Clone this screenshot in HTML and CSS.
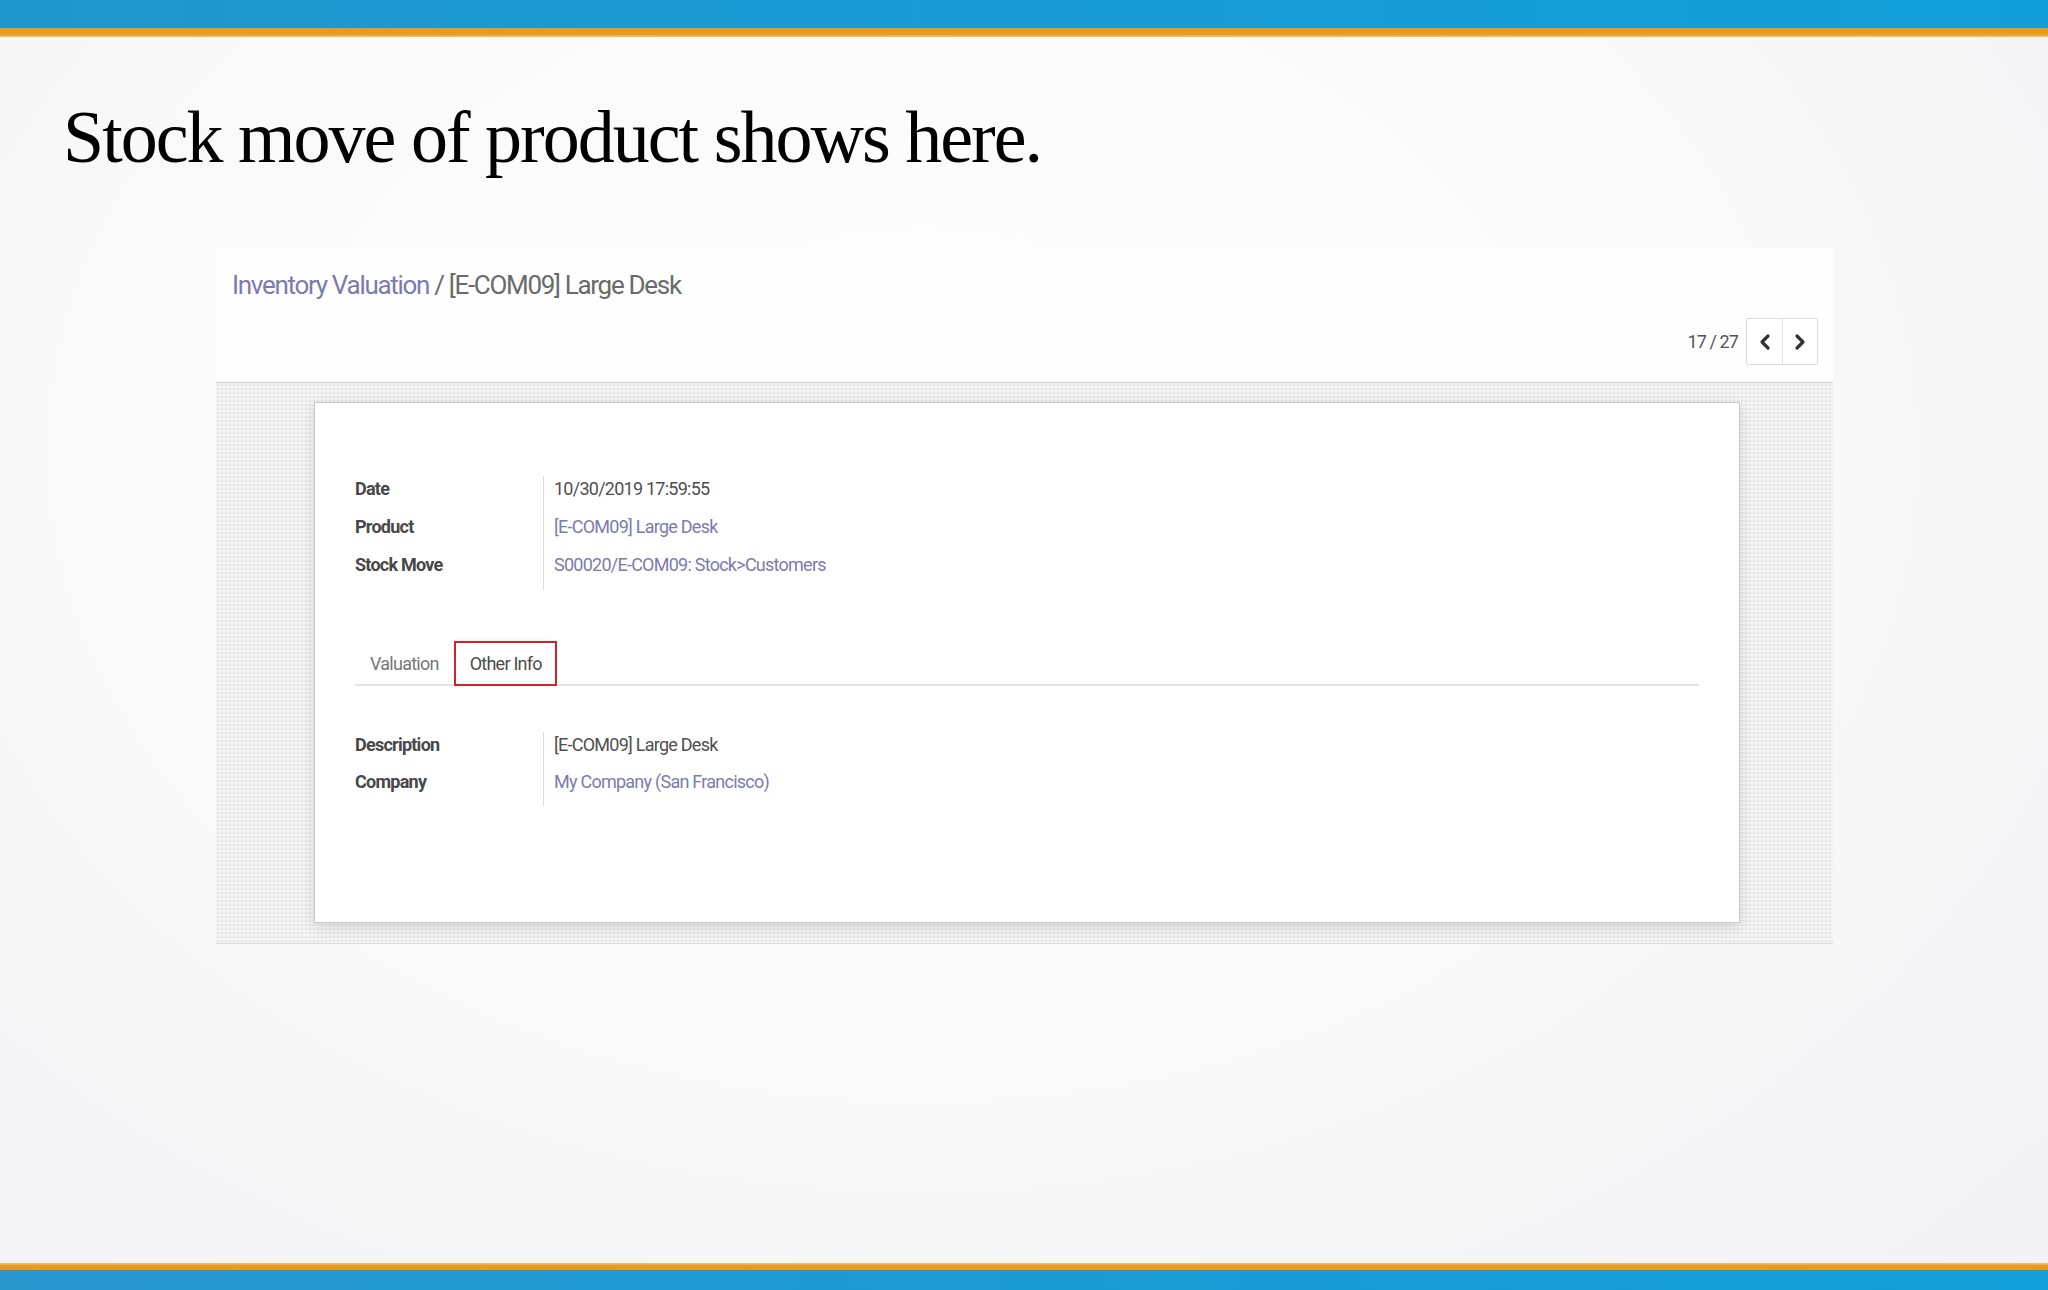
FILE: index.html
```html
<!DOCTYPE html>
<html lang="en">
<head>
<meta charset="utf-8">
<title>Stock move of product</title>
<link rel="stylesheet" href="styles.css">
</head>
<body>
<div class="slide">
  <div class="topbar"></div>
  <div class="topstripe"></div>
  <main class="content">
    <h1 class="title">Stock move of product shows here.</h1>
    <section class="card">
      <header class="cp">
        <div class="breadcrumb"><span class="bc-link">Inventory Valuation</span><span class="bc-cur"> / [E-COM09] Large Desk</span></div>
        <div class="pager">
          <span class="pager-val">17 / 27</span>
          <div class="pager-btns">
            <button class="pbtn" aria-label="Previous"><svg width="12" height="18" viewBox="0 0 12 18"><polyline points="9,3 3,9 9,15" fill="none" stroke="#333" stroke-width="3.2" stroke-linecap="round" stroke-linejoin="round"/></svg></button>
            <button class="pbtn" aria-label="Next"><svg width="12" height="18" viewBox="0 0 12 18"><polyline points="3,3 9,9 3,15" fill="none" stroke="#333" stroke-width="3.2" stroke-linecap="round" stroke-linejoin="round"/></svg></button>
          </div>
        </div>
      </header>
      <div class="sheet-bg">
        <div class="sheet">
          <div class="group group-main">
            <div class="labels">
              <div class="row lbl">Date</div>
              <div class="row lbl">Product</div>
              <div class="row lbl">Stock Move</div>
            </div>
            <div class="values">
              <div class="row val">10/30/2019 17:59:55</div>
              <div class="row val link">[E-COM09] Large Desk</div>
              <div class="row val link">S00020/E-COM09: Stock&gt;Customers</div>
            </div>
          </div>
          <nav class="tabs">
            <span class="tab">Valuation</span>
            <span class="tab active">Other Info</span>
          </nav>
          <div class="group group-info">
            <div class="labels">
              <div class="row lbl">Description</div>
              <div class="row lbl">Company</div>
            </div>
            <div class="values">
              <div class="row val">[E-COM09] Large Desk</div>
              <div class="row val link">My Company (San Francisco)</div>
            </div>
          </div>
        </div>
      </div>
    </section>
  </main>
  <div class="bottomstripe"></div>
  <div class="bottombar"></div>
</div>
</body>
</html>
```
FILE: styles.css
```css
html, body {
  margin: 0;
  padding: 0;
}
body {
  width: 2048px;
  height: 1290px;
  overflow: hidden;
  background: #f7f7f9;
}
.slide {
  width: 2048px;
  height: 1290px;
  display: flex;
  flex-direction: column;
  background: radial-gradient(ellipse at 45% 35%, #fefefe 0%, #fafafb 45%, #f2f2f4 100%);
}
.topbar {
  height: 28px;
  background: linear-gradient(90deg, #2196cc 0%, #1a9bd5 40%, #129fd9 100%);
}
.topstripe {
  height: 9px;
  background: linear-gradient(180deg, #e69a22 0%, #e99c1f 70%, #f1c47a 100%);
}
.content {
  flex: 1;
  padding: 63px 0 0 63px;
}
.title {
  margin: 0;
  font-family: "Liberation Serif", "Times New Roman", serif;
  font-weight: normal;
  font-size: 74px;
  line-height: 1;
  color: #000;
  letter-spacing: -2px;
}
.card {
  margin: 74px 0 0 153px;
  width: 1617px;
  font-family: "Roboto", "Liberation Sans", sans-serif;
}
.cp {
  height: 135px;
  background: #fefefe;
  border-bottom: 1px solid #cfcfd2;
  box-sizing: border-box;
  padding: 0 15px 0 16px;
  display: flex;
  flex-direction: column;
  justify-content: space-between;
}
.breadcrumb {
  margin-top: 21px;
  font-size: 26px;
  line-height: 32px;
  letter-spacing: -1.3px;
}
.bc-link { color: #7c7bad; }
.bc-cur { color: #6a6a6a; }
.pager {
  align-self: flex-end;
  display: flex;
  align-items: center;
  gap: 8px;
  margin-bottom: 17px;
}
.pager-val {
  font-size: 18px;
  color: #555;
  letter-spacing: -0.9px;
}
.pager-btns {
  display: flex;
  border: 1px solid #dcdcdc;
  border-radius: 2px;
  background: #fff;
}
.pbtn {
  width: 35px;
  height: 45px;
  border: 0;
  padding: 0;
  margin: 0;
  background: transparent;
  display: flex;
  align-items: center;
  justify-content: center;
}
.pbtn + .pbtn {
  border-left: 1px solid #e2e2e2;
}
.sheet-bg {
  height: 561px;
  box-sizing: border-box;
  padding: 19px 93px 20px 98px;
  background-color: #f3f3f4;
  background-image: radial-gradient(circle, #e4e4e6 0.9px, transparent 1.2px);
  background-size: 4px 4px;
  border-bottom: 1px solid #dadadd;
}
.sheet {
  height: 100%;
  box-sizing: border-box;
  background: #fff;
  border: 1px solid #c9c9cc;
  box-shadow: 0 4px 14px rgba(0, 0, 0, 0.12);
  padding: 73px 40px 0 40px;
}
.group {
  display: flex;
}
.labels {
  width: 188px;
  border-right: 1px solid #dcdcdc;
}
.values {
  padding-left: 10px;
}
.row {
  height: 38px;
  line-height: 26px;
  font-size: 18px;
  letter-spacing: -0.75px;
  white-space: nowrap;
}
.lbl {
  font-weight: bold;
  color: #484848;
}
.val {
  color: #4f4f4f;
}
.val.link {
  color: #7c7bad;
}
.tabs {
  margin-top: 49px;
  display: flex;
  align-items: flex-end;
  border-bottom: 2px solid #e3e3e5;
  height: 45px;
}
.tab {
  font-size: 18px;
  letter-spacing: -0.75px;
  line-height: 41px;
  padding: 0 15px 0 15px;
  color: #777;
}
.tab.active {
  color: #4c4c4c;
  height: 41px;
  border: 2px solid #d8202a;
  margin-bottom: -2px;
  padding: 0 13px 0 14px;
  background: #fff;
}
.group-info {
  margin-top: 46px;
}
.group-info .row {
  height: 37px;
}
.bottomstripe {
  height: 7px;
  background: linear-gradient(180deg, #f5c37a 0%, #e89a1e 40%, #e89a1e 100%);
}
.bottombar {
  height: 20px;
  background: linear-gradient(90deg, #2a97cf 0%, #1b9bd4 50%, #139fd9 100%);
}
```
